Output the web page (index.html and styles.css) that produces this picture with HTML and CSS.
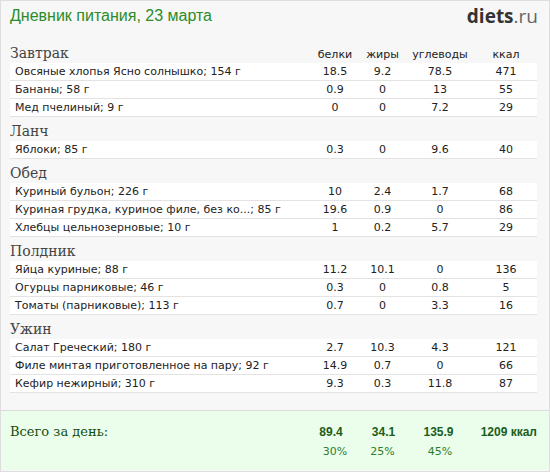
FILE: index.html
```html
<!DOCTYPE html>
<html lang="ru">
<head>
    <meta charset="UTF-8">
    <title>Дневник питания</title>
    <link rel="stylesheet" href="styles.css">
</head>
<body>
    <div class="page">
        <div class="header">
            <h1>Дневник питания, 23 марта</h1>
            <div class="logo"><b>diets</b>.ru</div>
        </div>

        <div class="meal">
            <div class="meal-title grid">
                <span class="name">Завтрак</span>
                <span class="col-head">белки</span>
                <span class="col-head">жиры</span>
                <span class="col-head">углеводы</span>
                <span class="col-head">ккал</span>
            </div>
            <div class="row grid"><span class="name">Овсяные хлопья Ясно солнышко; 154 г</span><span>18.5</span><span>9.2</span><span>78.5</span><span>471</span></div>
            <div class="row grid"><span class="name">Бананы; 58 г</span><span>0.9</span><span>0</span><span>13</span><span>55</span></div>
            <div class="row grid"><span class="name">Мед пчелиный; 9 г</span><span>0</span><span>0</span><span>7.2</span><span>29</span></div>
        </div>

        <div class="meal">
            <div class="meal-title">Ланч</div>
            <div class="row grid"><span class="name">Яблоки; 85 г</span><span>0.3</span><span>0</span><span>9.6</span><span>40</span></div>
        </div>

        <div class="meal">
            <div class="meal-title">Обед</div>
            <div class="row grid"><span class="name">Куриный бульон; 226 г</span><span>10</span><span>2.4</span><span>1.7</span><span>68</span></div>
            <div class="row grid"><span class="name">Куриная грудка, куриное филе, без ко...; 85 г</span><span>19.6</span><span>0.9</span><span>0</span><span>86</span></div>
            <div class="row grid"><span class="name">Хлебцы цельнозерновые; 10 г</span><span>1</span><span>0.2</span><span>5.7</span><span>29</span></div>
        </div>

        <div class="meal">
            <div class="meal-title">Полдник</div>
            <div class="row grid"><span class="name">Яйца куриные; 88 г</span><span>11.2</span><span>10.1</span><span>0</span><span>136</span></div>
            <div class="row grid"><span class="name">Огурцы парниковые; 46 г</span><span>0.3</span><span>0</span><span>0.8</span><span>5</span></div>
            <div class="row grid"><span class="name">Томаты (парниковые); 113 г</span><span>0.7</span><span>0</span><span>3.3</span><span>16</span></div>
        </div>

        <div class="meal">
            <div class="meal-title">Ужин</div>
            <div class="row grid"><span class="name">Салат Греческий; 180 г</span><span>2.7</span><span>10.3</span><span>4.3</span><span>121</span></div>
            <div class="row grid"><span class="name">Филе минтая приготовленное на пару; 92 г</span><span>14.9</span><span>0.7</span><span>0</span><span>66</span></div>
            <div class="row grid"><span class="name">Кефир нежирный; 310 г</span><span>9.3</span><span>0.3</span><span>11.8</span><span>87</span></div>
        </div>

        <div class="total">
            <div class="grid total-sum">
                <span class="name total-label">Всего за день:</span>
                <span>89.4</span>
                <span>34.1</span>
                <span>135.9</span>
                <span class="kcal">1209 ккал</span>
            </div>
            <div class="grid total-pct">
                <span class="name"></span>
                <span>30%</span>
                <span>25%</span>
                <span>45%</span>
                <span></span>
            </div>
        </div>
    </div>
</body>
</html>
```

FILE: styles.css
```css
body {
    margin: 0;
    font-family: "DejaVu Sans", Verdana, sans-serif;
    font-size: 11px;
    color: #222;
    background: #fff;
}

.page {
    width: 550px;
    height: 472px;
    box-sizing: border-box;
    border: 1px solid #dedede;
    background: #f7f7f7;
    overflow: hidden;
}

.header {
    display: flex;
    justify-content: space-between;
    align-items: flex-start;
    height: 38px;
    padding: 0 11px 0 9px;
}

h1 {
    margin: 6px 0 0;
    font-family: "Liberation Sans", Arial, sans-serif;
    font-weight: normal;
    font-size: 16px;
    color: #2a8c2a;
}

.logo {
    margin-top: 2px;
    font-family: "Open Sans", Arial, sans-serif;
    font-size: 19px;
    color: #666;
}

.logo b {
    color: #333;
}

.meal {
    padding: 0 12px 0 9px;
}

.grid {
    display: grid;
    grid-template-columns: 300px 50px 45px 70px 62px;
    text-align: center;
}

.grid .name {
    text-align: left;
}

.meal-title {
    height: 24px;
    box-sizing: border-box;
    padding-top: 5px;
    line-height: 18px;
    font-family: "DejaVu Serif", Georgia, serif;
    font-size: 14px;
    color: #444;
}

.col-head {
    font-family: "DejaVu Sans", Verdana, sans-serif;
    font-size: 11px;
    color: #222;
    padding-top: 2px;
}

.row {
    height: 17px;
    line-height: 17px;
    background: #fff;
    border-bottom: 1px solid #e3e3e3;
}

.row .name {
    padding-left: 5px;
    white-space: nowrap;
}

.total {
    margin-top: 17px;
    height: 60px;
    box-sizing: border-box;
    border-top: 1px solid #dcdcdc;
    background: #ebfdeb;
    padding: 11px 12px 0 9px;
}

.total-sum {
    grid-template-columns: 296px 50px 55px 55px 71px;
    height: 20px;
    line-height: 20px;
    font-family: "Liberation Sans", Arial, sans-serif;
    font-weight: bold;
    font-size: 12px;
    color: #1b5e1b;
}

.total-sum .kcal {
    text-align: right;
}

.total-label {
    font-family: "DejaVu Serif", Georgia, serif;
    font-weight: normal;
    font-size: 13px;
    color: #144d14;
}

.total-pct {
    line-height: 20px;
    font-size: 11px;
    color: #2e7d2e;
}
```
